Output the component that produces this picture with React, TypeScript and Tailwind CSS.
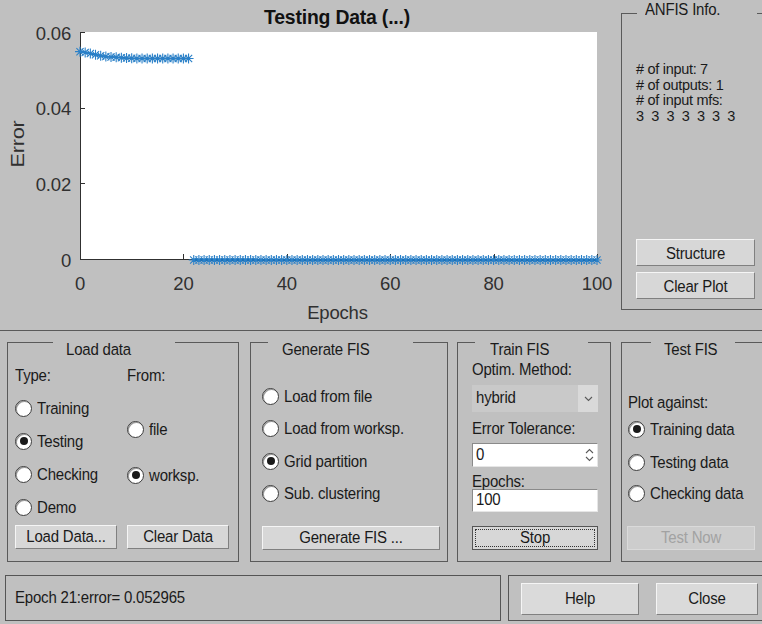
import React from "react";

// ---------- error plot ----------
const X0 = 80;
const X1 = 597;
const Y0 = 259;
const Y1 = 32;
const xs = (e: number) => X0 + (e / 100) * (X1 - X0);
const ys = (v: number) => Y0 - (v / 0.06) * (Y0 - Y1);

const early = [
  0.0548, 0.0546, 0.0543, 0.054, 0.0537, 0.0535, 0.0534, 0.0533, 0.0532, 0.0531, 0.05305,
  0.053, 0.053, 0.053, 0.053, 0.053, 0.053, 0.053, 0.053, 0.053, 0.053, 0.053,
];

const points: [number, number][] = [
  ...early.map((v, i) => [xs(i), ys(v)] as [number, number]),
  ...Array.from({ length: 79 }, (_, k) => [xs(22 + k), Y0 + 1] as [number, number]),
];

function starPath(pts: [number, number][], r: number) {
  const d = r * 0.72;
  return pts
    .map(
      ([x, y]) =>
        `M${x - r} ${y}H${x + r}M${x} ${y - r}V${y + r}M${x - d} ${y - d}L${x + d} ${y + d}M${x - d} ${y + d}L${x + d} ${y - d}`
    )
    .join("");
}

function ErrorPlot() {
  const xTicks = [0, 20, 40, 60, 80, 100];
  const yTicks: [number, string][] = [
    [0.06, "0.06"],
    [0.04, "0.04"],
    [0.02, "0.02"],
    [0, "0"],
  ];
  const upper = points.slice(0, early.length);
  const lower = points.slice(early.length);
  return (
    <svg width={612} height={330} className="block shrink-0" fontFamily="'Liberation Sans', Arial, sans-serif">
      <rect x={X0} y={Y1} width={X1 - X0} height={Y0 - Y1} fill="#ffffff" />
      <text x={337} y={24} fontSize={20} fontWeight={700} fill="#111" textAnchor="middle" textLength={146} lengthAdjust="spacingAndGlyphs">
        Testing Data (...)
      </text>
      {/* axes */}
      <path d={`M${X0 + 0.5} ${Y1}V${Y0 + 0.5}H${X1}`} stroke="#303030" strokeWidth={1} fill="none" />
      {yTicks.map(([v]) => (
        <path key={v} d={`M${X0} ${Math.round(ys(v)) + 0.5}h5`} stroke="#303030" strokeWidth={1} />
      ))}
      {xTicks.map((e) => (
        <path key={e} d={`M${Math.round(xs(e)) + 0.5} ${Y0}v-5`} stroke="#303030" strokeWidth={1} />
      ))}
      {yTicks.map(([v, t]) => (
        <text key={t} x={71} y={ys(v) + 7.5} fontSize={18.5} fill="#303030" textAnchor="end">
          {t}
        </text>
      ))}
      {xTicks.map((e) => (
        <text key={e} x={xs(e)} y={290} fontSize={18.5} fill="#303030" textAnchor="middle">
          {e}
        </text>
      ))}
      <text x={337.5} y={319} fontSize={18.5} fill="#303030" textAnchor="middle">
        Epochs
      </text>
      <text
        transform="translate(24 144) rotate(-90)"
        fontSize={19}
        fill="#303030"
        textAnchor="middle"
        textLength={47}
        lengthAdjust="spacingAndGlyphs"
      >
        Error
      </text>
      {/* data */}
      <polyline points={upper.map((p) => p.join(",")).join(" ")} fill="none" stroke="#0b5fa5" strokeWidth={1.8} />
      <polyline points={lower.map((p) => p.join(",")).join(" ")} fill="none" stroke="#0b5fa5" strokeWidth={1.8} />
      <path d={starPath(points, 5)} stroke="#2a80c8" strokeWidth={1.1} fill="none" />
    </svg>
  );
}

// ---------- controls ----------

// UI captions are drawn slightly tall and narrow, like the toolkit's font
function T({ children }: { children: React.ReactNode }) {
  return <span className="inline-block origin-center scale-y-[1.1] whitespace-pre">{children}</span>;
}

function Radio({ label, checked }: { label: string; checked?: boolean }) {
  return (
    <div className="flex h-[20px] items-center">
      <span className="flex h-[17px] w-[17px] shrink-0 items-center justify-center rounded-full border border-[#3c3c3c] bg-white shadow-[inset_1px_1px_0_#9a9a9a]">
        {checked && <span className="h-[8px] w-[8px] rounded-full bg-[#1a1a1a]" />}
      </span>
      <span className="ml-[5px] whitespace-nowrap leading-[18px]">
        <T>{label}</T>
      </span>
    </div>
  );
}

function Btn({ children, className }: { children: React.ReactNode; className?: string }) {
  return (
    <div
      className={`flex shrink-0 items-center justify-center whitespace-nowrap border border-t-[#f5f5f5] border-l-[#f5f5f5] border-r-[#808080] border-b-[#808080] bg-[#d7d7d7] leading-[18px] ${className ?? ""}`}
    >
      <T>{children}</T>
    </div>
  );
}

function GroupBox({
  title,
  gapClass,
  className,
  children,
}: {
  title: string;
  gapClass: string;
  className: string;
  children?: React.ReactNode;
}) {
  return (
    <div className={`relative shrink-0 border border-[#5a5a5a] ${className}`}>
      <div className={`absolute h-[18px] whitespace-nowrap bg-[#c0c0c0] leading-[18px] ${gapClass}`}>
        <T>{title}</T>
      </div>
      {children}
    </div>
  );
}

function Chevron({ up, className }: { up?: boolean; className?: string }) {
  return (
    <svg width={9} height={6} viewBox="0 0 9 6" className={className}>
      <path d={up ? "M1 5L4.5 1.5L8 5" : "M1 1L4.5 4.5L8 1"} stroke="#5a5a5a" strokeWidth={1.1} fill="none" />
    </svg>
  );
}

export default function App() {
  return (
    <div className="h-[624px] w-[762px] overflow-hidden bg-[#c0c0c0] font-['Liberation_Sans',Arial,sans-serif] text-[15px] tracking-[-0.2px] text-[#1a1a1a]">
      {/* top: plot and ANFIS info */}
      <div className="flex h-[330px]">
        <ErrorPlot />
        <div className="pl-[9px] pt-[13px]">
          <GroupBox title="ANFIS Info." gapClass="top-[-14px] left-[15px] w-[120px] pl-[8px]" className="flex h-[297px] w-[150px] flex-col">
            <div className="whitespace-pre pl-[14px] pt-[48px] text-[14.5px] leading-[15.5px] tracking-[-0.3px]">
              <div># of input: 7</div>
              <div># of outputs: 1</div>
              <div># of input mfs:</div>
              <div>3  3  3  3  3  3  3</div>
            </div>
            <Btn className="ml-[14px] mt-auto h-[27px] w-[119px]">Structure</Btn>
            <Btn className="mb-[10px] ml-[14px] mt-[6px] h-[27px] w-[119px]">Clear Plot</Btn>
          </GroupBox>
        </div>
      </div>

      {/* bottom panel */}
      <div className="border-t border-[#5a5a5a] pt-[11px]">
        <div className="flex">
          {/* Load data */}
          <GroupBox title="Load data" gapClass="top-[-3px] left-[45px] w-[122px] pl-[13px]" className="ml-[7px] h-[220px] w-[232px]">
            <div className="flex flex-col px-[7px] pt-[23px]">
              <div className="flex">
                <div className="flex w-[112px] flex-col">
                  <div className="leading-[18px]">
                    <T>Type:</T>
                  </div>
                  <div className="mt-[14px]">
                    <Radio label="Training" />
                  </div>
                  <div className="mt-[13px]">
                    <Radio label="Testing" checked />
                  </div>
                  <div className="mt-[13px]">
                    <Radio label="Checking" />
                  </div>
                  <div className="mt-[13px]">
                    <Radio label="Demo" />
                  </div>
                </div>
                <div className="flex flex-col">
                  <div className="leading-[18px]">
                    <T>From:</T>
                  </div>
                  <div className="mt-[35px]">
                    <Radio label="file" />
                  </div>
                  <div className="mt-[26px]">
                    <Radio label="worksp." checked />
                  </div>
                </div>
              </div>
              <div className="mt-[8px] flex">
                <Btn className="h-[24px] w-[102px]">Load Data...</Btn>
                <Btn className="ml-[10px] h-[24px] w-[102px]">Clear Data</Btn>
              </div>
            </div>
          </GroupBox>

          {/* Generate FIS */}
          <GroupBox title="Generate FIS" gapClass="top-[-3px] left-[17px] w-[145px] pl-[14px]" className="ml-[11px] h-[220px] w-[198px]">
            <div className="flex flex-col pl-[11px] pt-[43px]">
              <Radio label="Load from file" />
              <div className="mt-[12px]">
                <Radio label="Load from worksp." />
              </div>
              <div className="mt-[13px]">
                <Radio label="Grid partition" checked />
              </div>
              <div className="mt-[12px]">
                <Radio label="Sub. clustering" />
              </div>
              <Btn className="mt-[23px] h-[24px] w-[178px]">Generate FIS ...</Btn>
            </div>
          </GroupBox>

          {/* Train FIS */}
          <GroupBox title="Train FIS" gapClass="top-[-3px] left-[17px] w-[113px] pl-[15px]" className="ml-[9px] h-[220px] w-[154px]">
            <div className="flex w-[140px] flex-col pl-[14px] pt-[17px]">
              <div className="leading-[18px]">
                <T>Optim. Method:</T>
              </div>
              <div className="mt-[7px] flex h-[27px] w-[126px] bg-[#c9c9c9]">
                <div className="flex flex-1 items-center pl-[4px]">
                  <T>hybrid</T>
                </div>
                <div className="flex w-[20px] items-center justify-center bg-[#d9d9d9]">
                  <Chevron />
                </div>
              </div>
              <div className="mt-[7px] leading-[18px]">
                <T>Error Tolerance:</T>
              </div>
              <div className="mt-[6px] flex h-[24px] w-[126px] border border-t-[#8a8a8a] border-l-[#8a8a8a] border-r-[#e6e6e6] border-b-[#e6e6e6] bg-white">
                <div className="flex flex-1 items-center pl-[3px]">
                  <T>0</T>
                </div>
                <div className="flex w-[16px] flex-col items-center justify-center gap-[2px]">
                  <Chevron up />
                  <Chevron />
                </div>
              </div>
              <div className="mt-[6px] leading-[16px]">
                <T>Epochs:</T>
              </div>
              <div className="flex h-[23px] w-[126px] items-center border border-t-[#8a8a8a] border-l-[#8a8a8a] border-r-[#e6e6e6] border-b-[#e6e6e6] bg-white pl-[3px]">
                <T>100</T>
              </div>
              <div className="relative mt-[14px] flex h-[24px] w-[126px] items-center justify-center border border-[#555] bg-[#d7d7d7] leading-[18px]">
                <div className="absolute inset-[2px] border border-dotted border-[#333]" />
                <T>Stop</T>
              </div>
            </div>
          </GroupBox>

          {/* Test FIS */}
          <GroupBox title="Test FIS" gapClass="top-[-3px] left-[29px] w-[84px] pl-[13px]" className="ml-[10px] h-[220px] w-[150px]">
            <div className="flex flex-col pl-[6px] pt-[50px]">
              <div className="leading-[18px]">
                <T>Plot against:</T>
              </div>
              <div className="mt-[8px]">
                <Radio label="Training data" checked />
              </div>
              <div className="mt-[13px]">
                <Radio label="Testing data" />
              </div>
              <div className="mt-[11px]">
                <Radio label="Checking data" />
              </div>
              <div className="ml-[-1px] mt-[23px] flex h-[24px] w-[128px] items-center justify-center border border-[#dadada] bg-[#cdcdcd] leading-[18px] text-[#a2a2a2]">
                <T>Test Now</T>
              </div>
            </div>
          </GroupBox>
        </div>

        {/* status line and dialog buttons */}
        <div className="mt-[13px] flex">
          <div className="ml-[5px] flex h-[46px] w-[496px] shrink-0 items-center border border-[#555] pl-[9px]">
            <T>Epoch 21:error= 0.052965</T>
          </div>
          <div className="ml-[7px] flex h-[46px] w-[262px] shrink-0 border border-[#555]">
            <Btn className="ml-[12px] mt-[7px] h-[32px] w-[118px] bg-[#dadada]">Help</Btn>
            <Btn className="ml-[17px] mt-[7px] h-[32px] w-[102px] bg-[#dadada]">Close</Btn>
          </div>
        </div>
      </div>
    </div>
  );
}
